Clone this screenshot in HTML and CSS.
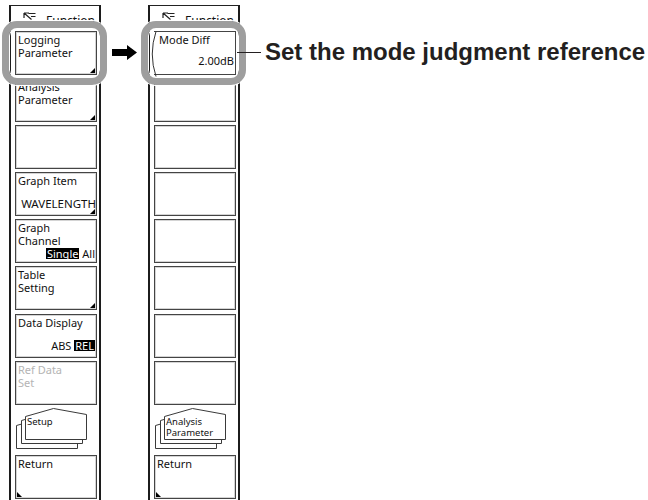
FILE: index.html
```html
<!DOCTYPE html>
<html lang="en">
<head>
    <meta charset="UTF-8">
    <meta name="viewport" content="width=device-width, initial-scale=1.0">
    <title>Mode Diff soft key</title>
    <link rel="stylesheet" href="styles.css">
</head>
<body>
    <div class="page">
        <div class="panel">
            <div class="panel-head">
                <svg class="head-icon" width="13" height="9" viewBox="0 0 13 9">
                    <path d="M1 1V6M1 1H6M1 1L8.5 7.5M5.5 1.5H12.5M8 4.5H12.5" />
                </svg>
                <span class="head-title">Function</span>
            </div>
            <div class="keys">
                <div class="key mark-r"><div class="key-label">Logging<br>Parameter</div></div>
                <div class="key mark-r"><div class="key-label">Analysis<br>Parameter</div></div>
                <div class="key"></div>
                <div class="key mark-r">
                    <div class="key-label">Graph Item</div>
                    <div class="key-value wide">WAVELENGTH</div>
                </div>
                <div class="key">
                    <div class="key-label">Graph<br>Channel</div>
                    <div class="key-value"><span class="sel">Single</span> All</div>
                </div>
                <div class="key mark-r"><div class="key-label">Table<br>Setting</div></div>
                <div class="key">
                    <div class="key-label">Data Display</div>
                    <div class="key-value">ABS <span class="sel">REL</span></div>
                </div>
                <div class="key key-off"><div class="key-label">Ref Data<br>Set</div></div>
                <div class="key-stack">
                    <svg width="82" height="44" viewBox="0 0 82 44">
                        <polygon points="1.5,17.5 29.5,9.5 62.5,15.5 62.5,40.5 1.5,40.5" />
                        <polygon points="6.5,12.5 34.5,4.5 67.5,10.5 67.5,35.5 6.5,35.5" />
                        <polygon points="10.5,8.5 38.5,0.5 71.5,6.5 71.5,31.5 10.5,31.5" />
                        <text x="12" y="17">Setup</text>
                    </svg>
                </div>
                <div class="key mark-l"><div class="key-label">Return</div></div>
            </div>
            <div class="focus"></div>
        </div>

        <div class="link">
            <svg width="26" height="16" viewBox="0 0 26 16">
                <polygon points="0,4 15,4 15,0 25,7.5 15,15 15,11 0,11" />
            </svg>
        </div>

        <div class="panel">
            <div class="panel-head">
                <svg class="head-icon" width="13" height="9" viewBox="0 0 13 9">
                    <path d="M1 1V6M1 1H6M1 1L8.5 7.5M5.5 1.5H12.5M8 4.5H12.5" />
                </svg>
                <span class="head-title">Function</span>
            </div>
            <div class="keys">
                <div class="key key-mode">
                    <svg class="mode-edge" width="7" height="46" viewBox="0 0 7 46">
                        <path d="M5 0.5Q-2.5 23 5 45.5" />
                    </svg>
                    <div class="key-label">Mode Diff</div>
                    <div class="key-value">2.00dB</div>
                </div>
                <div class="key"></div>
                <div class="key"></div>
                <div class="key"></div>
                <div class="key"></div>
                <div class="key"></div>
                <div class="key"></div>
                <div class="key"></div>
                <div class="key-stack">
                    <svg width="82" height="44" viewBox="0 0 82 44">
                        <polygon points="1.5,17.5 29.5,9.5 62.5,15.5 62.5,40.5 1.5,40.5" />
                        <polygon points="6.5,12.5 34.5,4.5 67.5,10.5 67.5,35.5 6.5,35.5" />
                        <polygon points="10.5,8.5 38.5,0.5 71.5,6.5 71.5,31.5 10.5,31.5" />
                        <text x="12" y="17">Analysis</text>
                        <text x="12" y="27.5">Parameter</text>
                    </svg>
                </div>
                <div class="key mark-l"><div class="key-label">Return</div></div>
            </div>
            <div class="focus"></div>
        </div>

        <div class="callout">
            <span class="callout-line"></span>
            <span class="callout-text">Set the mode judgment reference</span>
        </div>
    </div>
</body>
</html>
```

FILE: styles.css
```css
body {
    margin: 0;
    background-color: #fff;
    font-family: "Noto Sans", "Open Sans", sans-serif;
    color: #111;
    overflow: hidden;
    height: 500px;
}
.page {
    display: flex;
    align-items: flex-start;
    padding: 5px 0 0 9px;
}
.panel {
    position: relative;
    width: 92px;
    height: 495px;
    box-sizing: border-box;
    border-top: 1px solid #222;
    border-left: 2px solid #1c1c1c;
    border-right: 2px solid #1c1c1c;
    padding: 0 2px 0 4px;
}
.panel-head {
    display: flex;
    align-items: flex-start;
    height: 25px;
}
.head-icon {
    margin: 6px 0 0 8px;
    fill: none;
    stroke: #222;
    stroke-width: 1.2;
}
.head-title {
    margin: 8px 0 0 10px;
    font-size: 12px;
    line-height: 14px;
}
.keys {
    display: flex;
    flex-direction: column;
    gap: 3.1px;
}
.key {
    position: relative;
    height: 44px;
    box-sizing: border-box;
    border: 1px solid #444;
    box-shadow: inset 0 0 0 1px #d4d4d4;
    display: flex;
    flex-direction: column;
    justify-content: space-between;
    font-size: 11px;
    line-height: 13px;
    padding: 0 1px 0 2px;
}
.key-label {
    padding-top: 1px;
}
.key-value {
    text-align: right;
    padding-bottom: 5px;
}
.key-value.wide {
    font-size: 11.5px;
    margin-right: -1px;
}
.sel {
    display: inline-block;
    background-color: #000;
    color: #fff;
    line-height: 11px;
    padding: 0 1px;
}
.key-off {
    color: #b4b4b4;
}
.mark-r::after,
.mark-l::after {
    content: "";
    position: absolute;
    bottom: 1px;
    width: 0;
    height: 0;
    border-style: solid;
}
.mark-r::after {
    right: 1px;
    border-width: 0 0 5px 5px;
    border-color: transparent transparent #000 transparent;
}
.mark-l::after {
    left: 1px;
    border-width: 0 5px 5px 0;
    border-color: transparent transparent #000 transparent;
}
.key-mode {
    border-left: none;
    box-shadow: none;
    padding-left: 5px;
}
.key-mode .key-value {
    padding-bottom: 7px;
}
.mode-edge {
    position: absolute;
    left: -3px;
    top: -1px;
    fill: none;
    stroke: #333;
    stroke-width: 1;
}
.key-stack {
    height: 44px;
}
.key-stack svg {
    display: block;
}
.key-stack polygon {
    fill: #fff;
    stroke: #3a3a3a;
    stroke-width: 1;
}
.key-stack text {
    font-family: "Noto Sans", sans-serif;
    font-size: 9.5px;
    fill: #111;
}
.focus {
    position: absolute;
    left: -9px;
    top: 15px;
    width: 105px;
    height: 64px;
    box-sizing: border-box;
    border: 7px solid #9e9e9e;
    border-radius: 15px;
    box-shadow: 0 0 0 1px #fff, inset 0 0 0 1px #fff;
}
.link {
    width: 47px;
}
.link svg {
    display: block;
    margin: 40px 0 0 11px;
    fill: #000;
}
.callout {
    position: relative;
    z-index: 1;
    display: flex;
    align-items: center;
    margin: 33px 0 0 -3px;
}
.callout-line {
    width: 24px;
    border-top: 1px solid #231f20;
}
.callout-text {
    margin-left: 4px;
    font-family: "Liberation Sans", Arial, sans-serif;
    font-weight: bold;
    font-size: 24px;
    line-height: 28px;
    color: #231f20;
    white-space: nowrap;
}
```
